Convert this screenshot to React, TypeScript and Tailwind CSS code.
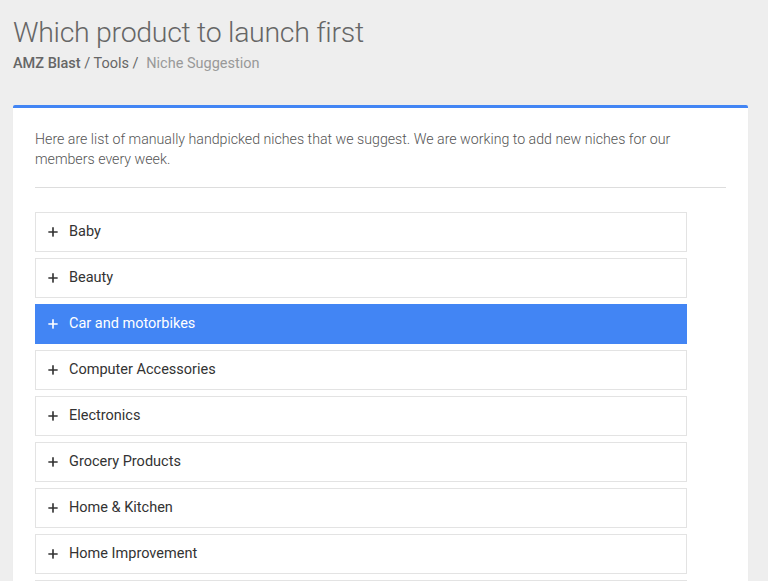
import { Plus } from 'lucide-react';

const niches = [
  'Baby',
  'Beauty',
  'Car and motorbikes',
  'Computer Accessories',
  'Electronics',
  'Grocery Products',
  'Home & Kitchen',
  'Home Improvement',
];

export default function App() {
  const active = 'Car and motorbikes';

  return (
    <div className="h-[581px] overflow-hidden bg-[#eeeeee] font-['Roboto',sans-serif]">
      <div className="pl-[13px] pr-5 pt-[14px]">
        <h1 className="text-[28.5px] leading-[38px] font-light text-[#666666] tracking-[-0.3px]">Which product to launch first</h1>
        <div className="mt-[2px] text-[14.5px] leading-5 text-[#777777]">
          <span className="font-medium text-[#666666]">AMZ Blast</span>
          <span className="text-[#666666]"> / Tools / </span>
          <span className="ml-1 text-[#999999]">Niche Suggestion</span>
        </div>

        <div className="mt-[31px] bg-white border-t-[3px] border-[#4285f4] rounded-t-[2px] shadow-[0_1px_1px_rgba(0,0,0,0.05)]">
          <div className="px-[22px] pt-[21px]">
            <p className="text-[14.2px] leading-5 font-light text-[#555555] pr-8">
              Here are list of manually handpicked niches that we suggest. We are working to add new niches for our members every week.
            </p>
            <hr className="mt-[18px] border-t border-[#dddddd]" />
            <div className="mt-[24px] w-[652px] flex flex-col gap-[6px]">
              {niches.map((n) => {
                const on = n === active;
                return (
                  <div
                    key={n}
                    className={`h-10 flex items-center gap-[9px] pl-[10px] pr-3 border text-[14.5px] ${
                      on ? 'bg-[#4285f4] border-[#4285f4] text-white' : 'bg-white border-[#e3e3e3] text-[#333333]'
                    }`}
                  >
                    <Plus className="w-[14px] h-[14px]" strokeWidth={2.8} />
                    <span>{n}</span>
                  </div>
                );
              })}
              {/* next row, only its top edge is in view */}
              <div className="h-10 border border-[#e3e3e3] bg-white" />
            </div>
          </div>
        </div>
      </div>
    </div>
  );
}
